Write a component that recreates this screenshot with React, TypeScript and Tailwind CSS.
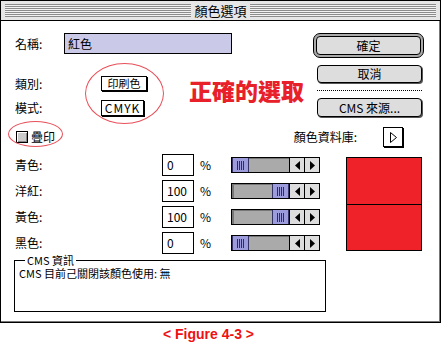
import React from "react";

const cjk = { fontFamily: '"Noto Sans CJK TC", "Liberation Sans", sans-serif' };

function Slider({ value }: { value: number }) {
  const thumb = (
    <div className="w-[17px] h-full bg-[#9c9cdc] border-x border-[#333366] flex items-center justify-center gap-[1px]">
      <div className="w-px h-[9px] bg-[#2a2a7a]" />
      <div className="w-px h-[9px] bg-[#2a2a7a]" />
      <div className="w-px h-[9px] bg-[#2a2a7a]" />
      <div className="w-px h-[9px] bg-[#2a2a7a]" />
    </div>
  );
  return (
    <div className="w-[89px] h-[16px] border border-black flex">
      <div className="flex-1 flex bg-[#aaaaaa] shadow-[inset_2px_1px_0_#777]">
        {value > 0 ? <div className="flex-1" /> : null}
        {thumb}
        {value > 0 ? null : <div className="flex-1" />}
      </div>
      <div className="w-[15px] h-full bg-[#dddddd] border-l border-black flex items-center justify-center">
        <svg width="5" height="9" viewBox="0 0 5 9">
          <polygon points="5,0 0,4.5 5,9" fill="#000" />
        </svg>
      </div>
      <div className="w-[15px] h-full bg-[#dddddd] border-l border-black flex items-center justify-center">
        <svg width="5" height="9" viewBox="0 0 5 9">
          <polygon points="0,0 5,4.5 0,9" fill="#000" />
        </svg>
      </div>
    </div>
  );
}

const inks = [
  { name: "青色:", value: 0 },
  { name: "洋紅:", value: 100 },
  { name: "黃色:", value: 100 },
  { name: "黑色:", value: 0 },
];

export default function App() {
  return (
    <div className="relative w-[443px] h-[345px] bg-white text-black text-[12px]" style={cjk}>
      <div className="w-[441px] h-[323px] border border-black shadow-[inset_-1px_-1px_0_#777] flex flex-col bg-white">
        {/* title bar */}
        <div className="h-[20px] border-b border-black bg-[#e6e6e6] px-[4px] py-[3px] flex">
          <div className="flex-1 flex items-center justify-center bg-[repeating-linear-gradient(180deg,#8c8c8c_0px,#8c8c8c_1px,#f2f2f2_1px,#f2f2f2_2px)]">
            <span className="bg-[#e6e6e6] px-[3px] text-[13px] leading-[14px]">顏色選項</span>
          </div>
        </div>

        {/* name / type / buttons */}
        <div className="h-[133px] flex">
          <div className="pl-[14px] flex flex-col">
            <div className="mt-[12px] h-[21px] flex items-center">
              <span className="w-[49px]">名稱:</span>
              <div className="w-[168px] h-[21px] border border-black bg-[#cacae8] pl-[3px] flex items-center">紅色</div>
            </div>
            <div className="mt-[22px] h-[15px] flex items-center">
              <span className="w-[86px]">類別:</span>
              <div className="w-[46px] h-[15px] border border-black bg-white shadow-[1px_1px_0_#000] flex items-center justify-center leading-none text-[11px]">印刷色</div>
            </div>
            <div className="mt-[9px] h-[16px] flex items-center">
              <span className="w-[86px]">模式:</span>
              <div className="w-[43px] h-[16px] border border-black bg-white shadow-[1px_1px_0_#000] flex items-center justify-center leading-none tracking-[1px]">CMYK</div>
            </div>
            <div className="mt-[14px] h-[13px] flex items-center">
              <div className="ml-[1px] w-[12px] h-[12px] border border-black bg-[#cccccc] shadow-[inset_1px_1px_0_#fff,inset_-1px_-1px_0_#888]" />
              <span className="ml-[3px]">疊印</span>
            </div>
          </div>

          <div className="flex-1 pr-[16px] flex flex-col items-end">
            <div className="mt-[12px] w-[111px] h-[25px] rounded-[7px] border border-black bg-[#aaaaaa] p-[2px]">
              <div className="h-full rounded-[4px] border border-black bg-[#dddddd] flex items-center justify-center">確定</div>
            </div>
            <div className="mt-[7px] mr-[2px] w-[105px] h-[18px] rounded-[4px] border border-black bg-[#dddddd] shadow-[1px_1px_0_#555] flex items-center justify-center">取消</div>
            <div className="mt-[7px] mr-[2px] w-[105px] border-t border-dotted border-black" />
            <div className="mt-[7px] mr-[2px] w-[105px] h-[19px] rounded-[4px] border border-black bg-[#dddddd] shadow-[1px_1px_0_#555] flex items-center justify-center">CMS 來源...</div>
            <div className="mt-[10px] mr-[21px] h-[20px] flex items-center">
              <span className="mr-[26px]">顏色資料庫:</span>
              <div className="w-[20px] h-[20px] border border-black bg-white shadow-[1px_1px_0_#000] flex items-center justify-center">
                <svg width="7" height="11" viewBox="0 0 7 11">
                  <polygon points="0.5,0.5 6.5,5.5 0.5,10.5" fill="none" stroke="#000" strokeWidth="1" />
                </svg>
              </div>
            </div>
          </div>
        </div>

        {/* ink rows + swatch */}
        <div className="h-[100px] flex pl-[14px]">
          <div className="flex flex-col gap-[4px]">
            {inks.map((ink) => (
              <div key={ink.name} className="h-[22px] flex items-center">
                <span className="w-[147px]">{ink.name}</span>
                <div className="w-[32px] h-[22px] border border-black bg-white pl-[4px] flex items-center">{ink.value}</div>
                <span className="ml-[6px] w-[31px]">%</span>
                <Slider value={ink.value} />
              </div>
            ))}
          </div>
          <div className="ml-[26px] mt-[3px] w-[76px] h-[94px] border border-black flex flex-col">
            <div className="flex-1 bg-[#ee2228] border-b border-black" />
            <div className="flex-1 bg-[#ee2228]" />
          </div>
        </div>

        {/* CMS info */}
        <fieldset className="ml-[13px] w-[312px] h-[58px] border border-black pl-[4px]">
          <legend className="ml-[6px] px-[2px] leading-[12px] text-[11px]">CMS 資訊</legend>
          <div className="mt-[1px] leading-[12px] text-[11px]">CMS 目前己關閉該顏色使用: 無</div>
        </fieldset>
      </div>

      <div
        className="mt-[3px] pl-[163px] text-[14px] leading-[16px] font-bold text-[#ee1111]"
        style={{ fontFamily: '"Liberation Sans", Arial, sans-serif' }}
      >
        &lt; Figure 4-3 &gt;
      </div>

      {/* annotations drawn over the dialog */}
      <div className="absolute left-[85px] top-[63px] w-[79px] h-[61px] rounded-[50%] border-[1.5px] border-[#e8505a]" />
      <div className="absolute left-[8px] top-[121px] w-[55px] h-[26px] rounded-[50%] border-[1.5px] border-[#e8505a]" />
      <div className="absolute left-[189px] top-[76px] text-[23px] leading-[28px] font-black text-[#e8202a]">正確的選取</div>
    </div>
  );
}
